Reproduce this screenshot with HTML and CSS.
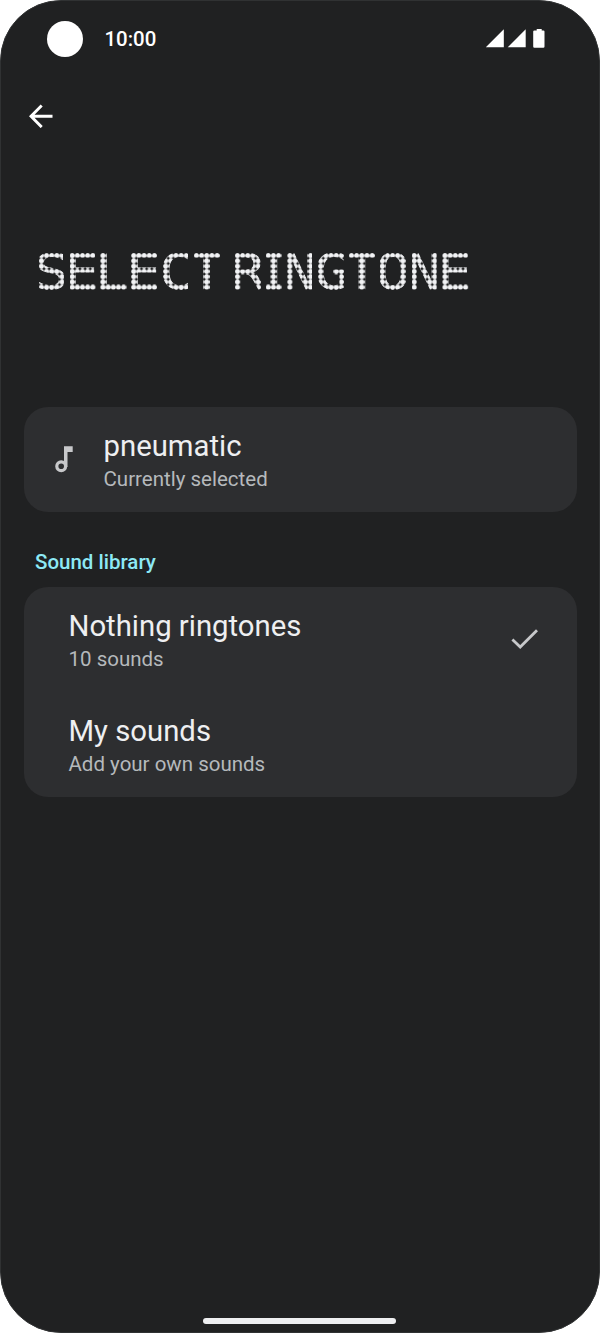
FILE: index.html
```
<!DOCTYPE html>
<html lang="en">

	<head>
		<meta charset="utf-8" />
		<meta name="viewport" content="width=device-width, initial-scale=1">
		<title>Select ringtone</title>
		<link rel="stylesheet" href="styles.css">
	</head>

	<body>
		<div class="phone">
			<div class="status">
				<i class="camera"></i>
				<span class="time">10:00</span>
				<svg class="status-icons" width="60" height="20" viewBox="0 0 60 20" fill="#fff">
					<path d="M18.8 .2V18.2H0.8z" />
					<path d="M40.7 .2V18.2H22.7z" />
					<path d="M51.7 0h5v1.4h1.6q1.2 0 1.2 1.2v15q0 1.2-1.2 1.2h-8.9q-1.2 0-1.2-1.2v-15q0-1.2 1.2-1.2h2.3z" />
				</svg>
			</div>
			<div class="nav">
				<svg width="24" height="24" viewBox="0 0 24 24" fill="none" stroke="#fff" stroke-width="2.9">
					<path d="M23.5 12.3H2.5M12.7 1.5L2 12.3l10.7 10.8" />
				</svg>
			</div>
			<h1 class="title">
				<span class="word"><b>S</b><b class="e">E</b><b class="l">L</b><b class="e">E</b><b class="c">C</b><b>T</b></span>
				<span class="word"><b class="r">R</b><b class="i">I</b><b>N</b><b class="c">G</b><b>T</b><b>O</b><b>N</b><b class="e">E</b></span>
			</h1>
			<div class="card">
				<div class="row row-icon">
					<svg class="note" width="20" height="27" viewBox="0 0 20 27">
						<path d="M10 .3h8.7v5.6h-5.2V21H10z" fill="#c7c8ca" />
						<circle cx="7.2" cy="20.3" r="4.4" fill="none" stroke="#c7c8ca" stroke-width="3.2" />
					</svg>
					<div class="row-text">
						<h3>pneumatic</h3>
						<p>Currently selected</p>
					</div>
				</div>
			</div>
			<h2 class="section">Sound library</h2>
			<div class="card">
				<div class="row">
					<div class="row-text">
						<h3>Nothing ringtones</h3>
						<p>10 sounds</p>
					</div>
					<svg class="check" width="28" height="22" viewBox="0 0 28 22" fill="none" stroke="#c7c8ca" stroke-width="2.8">
						<path d="M1.4 11.6l7.8 7.4L26 2.2" />
					</svg>
				</div>
				<div class="row">
					<div class="row-text">
						<h3>My sounds</h3>
						<p>Add your own sounds</p>
					</div>
				</div>
			</div>
			<div class="home-bar"></div>
		</div>
	</body>

</html>
```
FILE: styles.css
```
* {
	padding: 0;
	margin: 0;
	box-sizing: border-box;
}

body {
	background: #fff;
	font-family: Roboto, "Liberation Sans", sans-serif;
}

.phone {
	display: flex;
	flex-direction: column;
	width: 600px;
	height: 1333px;
	padding: 0 22.5px;
	background: #202122;
	border: 1px solid #303233;
	border-radius: 61px;
	overflow: hidden;
}
/*状态栏*/

.status {
	display: flex;
	align-items: center;
	height: 75px;
	padding: 0 31.5px 0 23px;
}

.camera {
	width: 36px;
	height: 36px;
	margin-top: 1px;
	border-radius: 50%;
	background: #fff;
}

.time {
	margin-left: 22px;
	font-size: 20.4px;
	font-weight: 500;
	color: #fff;
}

.status-icons {
	margin-left: auto;
}

.nav {
	height: 81px;
	padding: 28px 0 0 5px;
}

.nav svg {
	display: block;
}
/*点阵标题*/

.title {
	display: flex;
	gap: 13.63px;
	height: 249.6px;
	padding: 96px 0 0 12.6px;
	transform: scaleX(1.14);
	transform-origin: 0 0;
}

.word {
	display: flex;
	gap: 4.544px;
}

.title b {
	width: 22.72px;
	height: 36.9px;
	letter-spacing: -6px;
	text-indent: -3.9px;
	white-space: nowrap;
	font: 400 50.6px/38.8px "DejaVu Sans Mono", monospace;
	color: transparent;
	-webkit-text-stroke: .9px transparent;
	background: radial-gradient(ellipse 2.6px 3px, #f2f3f5 70%, transparent 100%) 0 0 / 4.544px 5.27px;
	-webkit-background-clip: text;
	background-clip: text;
}

.title .e {
	text-indent: -4.8px;
}

.title .l {
	text-indent: -5.3px;
}

.title .c {
	text-indent: -3.2px;
}

.title .r {
	text-indent: -4.4px;
}

.title .i {
	width: 13.63px;
	text-indent: -8.4px;
}
/*列表*/

.card {
	background: #2d2e30;
	border-radius: 24px;
}

.row {
	display: flex;
	align-items: center;
	height: 105px;
	padding: 0 38px 0 45px;
}

.row-icon {
	padding-left: 30px;
}

.note {
	margin-right: 30px;
}

.row-text {
	padding-top: 3px;
}

.row-text h3 {
	font-size: 29.3px;
	font-weight: 400;
	line-height: 36px;
	color: #eeeff1;
}

.row-text p {
	font-size: 20.5px;
	line-height: 30px;
	color: #b5b9bc;
}

.check {
	margin-left: auto;
}

.section {
	height: 75px;
	padding: 35px 0 0 11.5px;
	font-size: 20.5px;
	font-weight: 500;
	line-height: 30px;
	color: #8de9f5;
}

.home-bar {
	width: 193px;
	height: 6px;
	margin: auto auto 8px 179.5px;
	border-radius: 3px;
	background: #eeeff1;
}
```
